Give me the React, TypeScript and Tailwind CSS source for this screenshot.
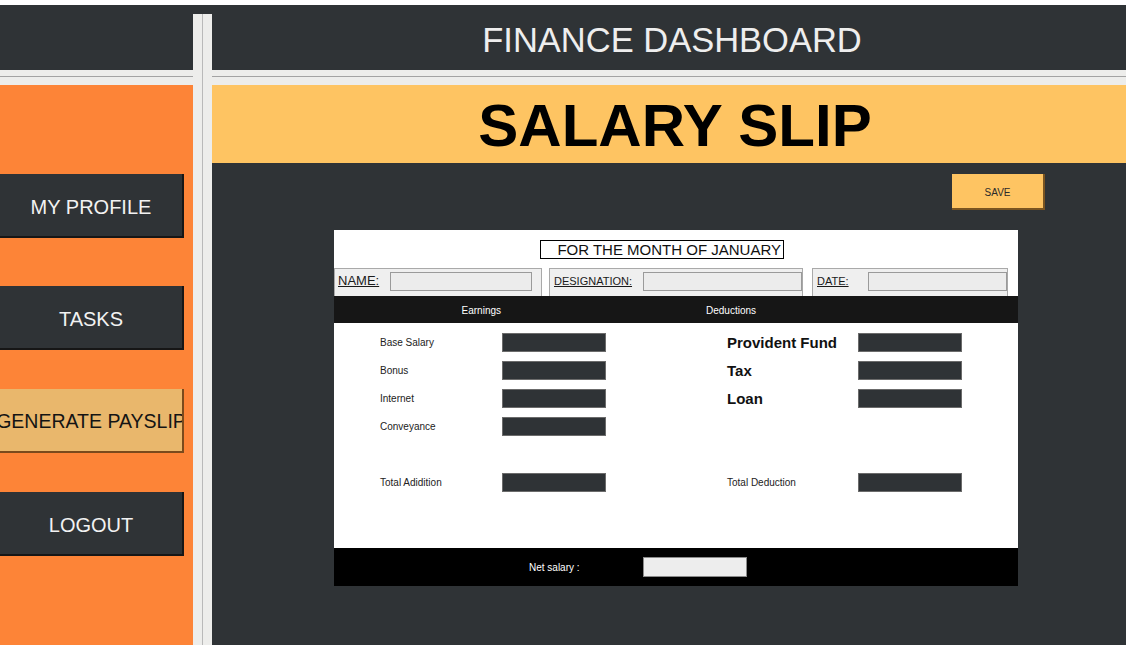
import React from "react";

const font = { fontFamily: '"Liberation Sans", Arial, sans-serif' };

type RowProps = { label: string; bold?: boolean };

const Row = ({ label, bold }: RowProps) => (
  <div className="flex h-[28px] items-start">
    <div
      className={
        bold
          ? "w-[131px] text-[15px] font-bold leading-[19px] text-[#111]"
          : "w-[122px] pt-[1px] text-[10px] leading-[17px] text-[#222]"
      }
    >
      {label}
    </div>
    <div className="h-[19px] w-[104px] border border-[#6b6b6b] bg-[#2f3336]" />
  </div>
);

const SideButton = ({ label, active }: { label: string; active?: boolean }) => (
  <div
    className={
      active
        ? "flex h-[64px] w-[184px] items-center justify-center overflow-hidden whitespace-nowrap border-b-2 border-r-2 border-[#7a4a1c] bg-[#e9b76c] pt-[4px] text-[19.5px] text-[#141414]"
        : "flex h-[64px] w-[184px] items-center justify-center whitespace-nowrap border-b-2 border-r-2 border-[#161616] bg-[#2f3336] pt-[4px] text-[20px] text-[#f2f2f2]"
    }
  >
    {label}
  </div>
);

const HBand = () => (
  <div className="flex h-[15px] flex-col bg-[#ededeb]">
    <div className="h-[6px]" />
    <div className="h-px bg-[#a3a3a3]" />
  </div>
);

export default function App() {
  return (
    <div className="flex h-[645px] w-[1126px] flex-col overflow-hidden bg-white pt-[5px]" style={font}>
      <div className="flex flex-1">
        {/* sidebar */}
        <div className="flex w-[193px] flex-col">
          <div className="h-[65px] bg-[#2f3336]" />
          <HBand />
          <div className="flex flex-1 flex-col gap-[39px] bg-[#fd8437] pt-[89px]">
            <div className="flex flex-col gap-[48px]">
              <SideButton label="MY PROFILE" />
              <SideButton label="TASKS" />
            </div>
            <SideButton label="GENERATE PAYSLIP" active />
            <SideButton label="LOGOUT" />
          </div>
        </div>

        {/* divider */}
        <div className="flex w-[19px] flex-col">
          <div className="h-[9px] bg-[#2f3336]" />
          <div className="flex flex-1 bg-[#ededeb]">
            <div className="w-[9px]" />
            <div className="w-px bg-[#b9b9b9]" />
          </div>
        </div>

        {/* main */}
        <div className="flex flex-1 flex-col">
          <div className="flex h-[65px] items-center justify-center bg-[#2f3336] pl-[6px] pt-[6px] text-[34.5px] text-[#eeeeee]">
            FINANCE DASHBOARD
          </div>
          <HBand />
          <div className="flex h-[78px] items-center justify-center bg-[#fec462] pl-[12px] pt-[3px] text-[60px] font-bold leading-none text-black">
            SALARY SLIP
          </div>
          <div className="flex flex-1 flex-col bg-[#2f3336]">
            <div className="flex justify-end pr-[81px] pt-[11px]">
              <div className="flex h-[36px] w-[93px] items-center justify-center border-b-2 border-r-2 border-[#7a5420] bg-[#fec462] pt-[3px] text-[10px] text-[#2a2a2a]">
                SAVE
              </div>
            </div>

            {/* slip */}
            <div className="ml-[122px] mt-[20px] flex h-[356px] w-[684px] flex-col bg-white">
              <div className="flex pt-[10px]">
                <div className="ml-[206px] flex h-[19px] w-[244px] items-center justify-end border border-black pr-[2px] text-[15px] leading-none text-[#111]">
                  FOR THE MONTH OF JANUARY
                </div>
              </div>

              <div className="mt-[8px] flex h-[29px] items-end text-[#1a1a1a]">
                <div className="flex h-[28px] w-[208px] items-start border border-b-0 border-[#a9a9a9] bg-[#efefef] pt-[3px]">
                  <span className="ml-[3px] w-[52px] pt-[2px] text-[13px] leading-[14px] underline">NAME:</span>
                  <div className="h-[19px] w-[142px] border border-[#9a9a9a] bg-[#ececec]" />
                </div>
                <div className="ml-[7px] flex h-[28px] w-[254px] items-start border border-b-0 border-[#a9a9a9] bg-[#efefef] pt-[3px]">
                  <span className="ml-[4px] w-[89px] pt-[3px] text-[11px] leading-[12px] underline">DESIGNATION:</span>
                  <div className="h-[19px] w-[159px] border border-[#9a9a9a] bg-[#ececec]" />
                </div>
                <div className="ml-[9px] flex h-[28px] w-[196px] items-start border border-b-0 border-[#a9a9a9] bg-[#efefef] pt-[3px]">
                  <span className="ml-[4px] w-[51px] pt-[3px] text-[11px] leading-[12px] underline">DATE:</span>
                  <div className="h-[19px] w-[140px] border border-[#9a9a9a] bg-[#ececec]" />
                </div>
              </div>

              <div className="flex h-[27px] items-center bg-[#161616] pt-[2px] text-[10px] text-white">
                <div className="w-[147px] text-right">
                  <span className="-mr-[20px] inline-block">Earnings</span>
                </div>
                <div className="w-[250px] text-right">
                  <span className="-mr-[25px] inline-block">Deductions</span>
                </div>
              </div>

              <div className="flex flex-1 pt-[10px]">
                <div className="ml-[46px] flex w-[347px] flex-col">
                  <Row label="Base Salary" />
                  <Row label="Bonus" />
                  <Row label="Internet" />
                  <Row label="Conveyance" />
                  <div className="h-[28px]" />
                  <Row label="Total Adidition" />
                </div>
                <div className="flex flex-col">
                  <Row label="Provident Fund" bold />
                  <Row label="Tax" bold />
                  <Row label="Loan" bold />
                  <div className="h-[56px]" />
                  <div className="flex h-[28px] items-start">
                    <div className="w-[131px] pt-[1px] text-[10px] leading-[17px] text-[#222]">Total Deduction</div>
                    <div className="h-[19px] w-[104px] border border-[#6b6b6b] bg-[#2f3336]" />
                  </div>
                </div>
              </div>

              <div className="flex h-[38px] items-center bg-black">
                <div className="w-[309px] pl-[195px] text-[10px] text-white">Net salary :</div>
                <div className="h-[20px] w-[104px] border border-[#8a8a8a] bg-[#ededed]" />
              </div>
            </div>
          </div>
        </div>
      </div>
    </div>
  );
}
